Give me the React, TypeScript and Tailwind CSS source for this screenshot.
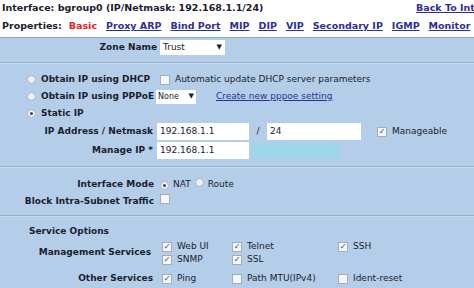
import React from "react";

type BoxProps = { checked?: boolean };

const Radio: React.FC<BoxProps> = ({ checked }) => (
  <span className="inline-flex h-[9px] w-[9px] shrink-0 items-center justify-center rounded-full border border-[#a9b4bf] bg-[#eef1f4]">
    {checked && <span className="h-[3px] w-[3px] rounded-full bg-[#3c4650]" />}
  </span>
);

const Check: React.FC<BoxProps> = ({ checked }) => (
  <span className="inline-flex h-[10px] w-[10px] shrink-0 items-center justify-center border border-[#a3adb8] bg-[#f4f6f8] text-[8px] leading-none text-[#3a4a5a]">
    {checked ? "✓" : ""}
  </span>
);

const Divider = () => <div className="border-t border-[#97b0c8] border-b border-b-[#c6dbef]" />;

const tabs = ["Proxy ARP", "Bind Port", "MIP", "DIP", "VIP", "Secondary IP", "IGMP", "Monitor"];

export default function App() {
  return (
    <div
      className="h-[288px] w-[474px] overflow-hidden bg-white text-[9px] text-[#1c1c2c]"
      style={{ fontFamily: '"DejaVu Sans", Verdana, sans-serif' }}
    >
      {/* header */}
      <div className="flex h-[16px] items-center justify-between whitespace-nowrap pl-[2px] text-[9.5px] font-bold">
        <span>Interface: bgroup0 (IP/Netmask: 192.168.1.1/24)</span>
        <a className="w-[58px] overflow-hidden text-[#2e2e9a] underline">Back To Interface</a>
      </div>
      <div className="flex h-[21px] items-center gap-[9px] whitespace-nowrap pl-[2px] text-[9.5px] font-bold">
        <span>Properties:</span>
        <span className="-ml-[2px] text-[#e3232b]">Basic</span>
        {tabs.map((t) => (
          <a key={t} className="text-[#2e2e9a] underline">
            {t}
          </a>
        ))}
      </div>
      <div className="h-[1px] bg-[#8ea6bd]" />

      <div className="bg-[#b4cee9]">
        {/* zone */}
        <div className="flex h-[24px] items-center pb-[5px]">
          <span className="w-[157px] text-right font-bold">Zone Name</span>
          <span className="ml-[3px] flex h-[15px] w-[65px] items-center justify-between bg-white px-[3px]">
            Trust <span className="text-[7px]">▼</span>
          </span>
        </div>
        <Divider />

        {/* ip mode */}
        <div className="pt-[7px]">
          <div className="flex h-[17px] items-center pl-[27px]">
            <Radio />
            <span className="ml-[5px] w-[119px] font-bold">Obtain IP using DHCP</span>
            <Check />
            <span className="ml-[5px]">Automatic update DHCP server parameters</span>
          </div>
          <div className="flex h-[17px] items-center pl-[27px]">
            <Radio />
            <span className="ml-[5px] w-[115px] whitespace-nowrap font-bold">Obtain IP using PPPoE</span>
            <span className="flex h-[14px] w-[40px] items-center justify-between bg-white px-[2px] text-[8px]">
              None <span className="text-[7px]">▼</span>
            </span>
            <a className="ml-[20px] text-[#2e2e9a] underline">Create new pppoe setting</a>
          </div>
          <div className="flex h-[17px] items-center pl-[27px]">
            <Radio checked />
            <span className="ml-[5px] font-bold">Static IP</span>
          </div>
          <div className="flex h-[19px] items-center">
            <span className="w-[157px] pr-[4px] text-right font-bold">IP Address / Netmask</span>
            <span className="flex h-[17px] w-[92px] items-center bg-white px-[3px]">192.168.1.1</span>
            <span className="w-[18px] text-center">/</span>
            <span className="flex h-[17px] w-[94px] items-center bg-white px-[3px]">24</span>
            <span className="ml-[16px]">
              <Check checked />
            </span>
            <span className="ml-[5px]">Manageable</span>
          </div>
          <div className="flex h-[19px] items-center">
            <span className="w-[157px] pr-[4px] text-right font-bold">Manage IP *</span>
            <span className="flex h-[17px] w-[92px] items-center bg-white px-[3px]">192.168.1.1</span>
            <span className="ml-[3px] h-[15px] w-[87px] bg-[#9bd7e6]" />
          </div>
        </div>
        <div className="h-[6px]" />
        <Divider />

        {/* interface mode */}
        <div className="pt-[8px] pb-[5px]">
          <div className="flex h-[17px] items-center">
            <span className="w-[157px] pr-[3px] text-right font-bold">Interface Mode</span>
            <span className="ml-[3px]">
              <Radio checked />
            </span>
            <span className="ml-[4px]">NAT</span>
            <span className="ml-[4px]">
              <Radio />
            </span>
            <span className="ml-[4px]">Route</span>
          </div>
          <div className="flex h-[17px] items-center">
            <span className="w-[157px] pr-[3px] text-right font-bold">Block Intra-Subnet Traffic</span>
            <span className="ml-[3px]">
              <Check />
            </span>
          </div>
        </div>
        <Divider />

        {/* services */}
        <div className="pt-[6px]">
          <div className="flex h-[17px] items-center pl-[29px] font-bold">Service Options</div>
          <div className="flex items-center">
            <span className="w-[157px] pr-[6px] text-right font-bold">Management Services</span>
            <div className="grid grid-cols-[70px_106px_80px] pl-[5px]">
              {[
                ["Web UI", true],
                ["Telnet", true],
                ["SSH", true],
                ["SNMP", true],
                ["SSL", true],
              ].map(([l, c]) => (
                <div key={l as string} className="flex h-[13px] items-center">
                  <Check checked={c as boolean} />
                  <span className="ml-[5px]">{l as string}</span>
                </div>
              ))}
            </div>
          </div>
          <div className="flex h-[24px] items-center pt-[2px]">
            <span className="w-[157px] pr-[4px] text-right font-bold">Other Services</span>
            <div className="grid grid-cols-[70px_106px_80px] pl-[5px]">
              {[
                ["Ping", true],
                ["Path MTU(IPv4)", false],
                ["Ident-reset", false],
              ].map(([l, c]) => (
                <div key={l as string} className="flex items-center">
                  <Check checked={c as boolean} />
                  <span className="ml-[5px]">{l as string}</span>
                </div>
              ))}
            </div>
          </div>
          <div className="h-[20px]" />
        </div>
      </div>
    </div>
  );
}
